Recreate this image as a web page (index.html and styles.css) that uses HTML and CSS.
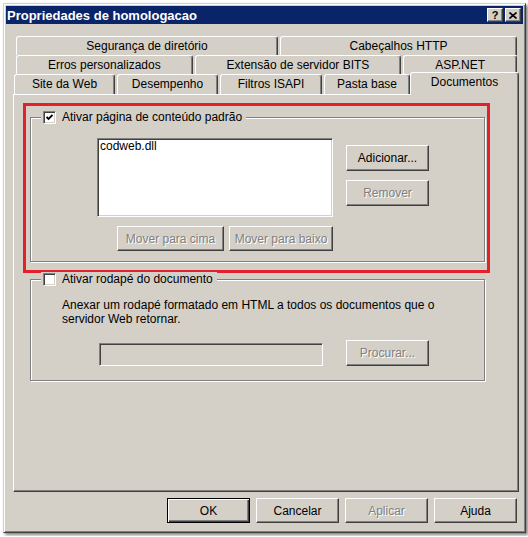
FILE: index.html
```html
<!DOCTYPE html>
<html lang="pt-BR">
<head>
    <meta charset="UTF-8">
    <meta name="viewport" content="width=device-width, initial-scale=1.0">
    <title>Propriedades de homologacao</title>
    <link rel="stylesheet" href="styles.css">
</head>
<body>
    <div class="dialog">
        <!-- Title bar with help and close buttons -->
        <div class="title-bar">
            <span class="title-text">Propriedades de homologacao</span>
            <div class="caption-buttons">
                <button class="caption-btn caption-help">?</button>
                <button class="caption-btn">
                    <svg width="8" height="7" viewBox="0 0 8 7">
                        <path d="M0.5 0.5 L7.5 6.5 M7.5 0.5 L0.5 6.5" stroke="#000" stroke-width="1.6" fill="none"/>
                    </svg>
                </button>
            </div>
        </div>

        <div class="dialog-body">
            <!-- Three rows of tabs, front row holds the selected one -->
            <div class="tab-strip">
                <div class="tab-row tab-row-top">
                    <div class="tab">Segurança de diretório</div>
                    <div class="tab">Cabeçalhos HTTP</div>
                </div>
                <div class="tab-row">
                    <div class="tab">Erros personalizados</div>
                    <div class="tab">Extensão de servidor BITS</div>
                    <div class="tab">ASP.NET</div>
                </div>
                <div class="tab-row tab-row-front">
                    <div class="tab">Site da Web</div>
                    <div class="tab">Desempenho</div>
                    <div class="tab">Filtros ISAPI</div>
                    <div class="tab">Pasta base</div>
                    <div class="tab tab-active">Documentos</div>
                </div>
            </div>

            <div class="tab-panel">
                <div class="highlight">
                    <div class="group">
                        <label class="group-legend">
                            <span class="checkbox">
                                <svg width="7" height="7" viewBox="0 0 7 7">
                                    <path d="M0.5 3 L2.5 5 L6.5 1" stroke="#000" stroke-width="1.8" fill="none"/>
                                </svg>
                            </span>
                            Ativar página de conteúdo padrão
                        </label>
                        <div class="default-docs">
                            <div class="listbox">codweb.dll</div>
                            <div class="side-buttons">
                                <button class="btn">Adicionar...</button>
                                <button class="btn" disabled>Remover</button>
                            </div>
                            <div class="move-buttons">
                                <button class="btn btn-move-up" disabled>Mover para cima</button>
                                <button class="btn btn-move-down" disabled>Mover para baixo</button>
                            </div>
                        </div>
                    </div>
                </div>

                <div class="group group-footer">
                    <label class="group-legend">
                        <span class="checkbox"></span>
                        Ativar rodapé do documento
                    </label>
                    <div class="footer-body">
                        <p class="footer-text">Anexar um rodapé formatado em HTML a todos os documentos que o servidor Web retornar.</p>
                        <div class="browse-row">
                            <input class="text-input" type="text" disabled>
                            <button class="btn" disabled>Procurar...</button>
                        </div>
                    </div>
                </div>
            </div>

            <div class="dialog-buttons">
                <button class="btn btn-dialog btn-default">OK</button>
                <button class="btn btn-dialog">Cancelar</button>
                <button class="btn btn-dialog" disabled>Aplicar</button>
                <button class="btn btn-dialog">Ajuda</button>
            </div>
        </div>
    </div>
</body>
</html>
```

FILE: styles.css
```css
/* Classic Windows dialog look */
body {
    margin: 0;
    background-color: #fff;
    font-family: "Liberation Sans", Arial, sans-serif;
    font-size: 12px;
    color: #000;
}

.dialog {
    width: 523px;
    height: 530px;
    box-sizing: border-box;
    margin: 3px;
    padding: 2px;
    background-color: #d4d0c8;
    border: 1px solid;
    border-color: #d4d0c8 #404040 #404040 #d4d0c8;
    box-shadow: inset 1px 1px #fff, inset -1px -1px #808080, 2px 2px 3px rgba(0, 0, 0, 0.5);
}

.title-bar {
    height: 18px;
    display: flex;
    align-items: center;
    justify-content: space-between;
    padding: 0 2px 0 1px;
    background-color: #0a246a;
}
.title-text {
    color: #fff;
    font-weight: bold;
    font-size: 13px;
}
.caption-buttons {
    display: flex;
    gap: 2px;
}
.caption-btn {
    width: 16px;
    height: 14px;
    box-sizing: border-box;
    padding: 0;
    display: flex;
    align-items: center;
    justify-content: center;
    background-color: #d4d0c8;
    border: 1px solid;
    border-color: #fff #404040 #404040 #fff;
    box-shadow: inset -1px -1px #808080;
    font-family: inherit;
    font-weight: bold;
    font-size: 11px;
    line-height: 1;
    color: #000;
}

.dialog-body {
    padding: 12px 4px 7px 7px;
}

/* Tabs */
.tab-row {
    display: flex;
    align-items: flex-end;
    gap: 2px;
    height: 19px;
    padding: 0 2px 0 3px;
}
.tab-row-front {
    height: 20px;
    padding-left: 1px;
}
.tab {
    flex: 1 1 auto;
    height: 100%;
    box-sizing: border-box;
    text-align: center;
    line-height: 18px;
    white-space: nowrap;
    border-top: 1px solid #fff;
    border-left: 1px solid #fff;
    border-right: 1px solid #404040;
    border-radius: 3px 3px 0 0;
    box-shadow: inset -1px 0 #808080;
}
.tab-row-top .tab:first-child {
    flex: 0 0 262px;
}
.tab-row-front .tab {
    flex: 0 0 101px;
}
.tab-row-front .tab:nth-child(3) {
    flex-basis: 102px;
}
.tab-row-front .tab:nth-child(4) {
    flex-basis: 86px;
}
.tab-row-front .tab-active {
    position: relative;
    z-index: 1;
    flex: 1 1 auto;
    height: 23px;
    margin: 0 -2px -1px -2px;
    padding-bottom: 4px;
    background-color: #d4d0c8;
}

.tab-panel {
    height: 398px;
    box-sizing: border-box;
    padding: 8px 0 0 9px;
    border-top: 1px solid #fff;
    border-left: 1px solid #fff;
    border-right: 1px solid #404040;
    border-bottom: 1px solid #404040;
    box-shadow: inset -1px -1px #808080;
}

.highlight {
    width: 467px;
    box-sizing: border-box;
    padding: 11px 2px 8px 4px;
    border: 3px solid #e3202b;
}

/* Etched group boxes */
.group {
    width: 455px;
    box-sizing: border-box;
    border: 1px solid #808080;
    box-shadow: inset 1px 1px #fff, 1px 1px #fff;
}
.group-footer {
    margin: 6px 0 0 7px;
}
.group-legend {
    display: flex;
    align-items: center;
    width: max-content;
    height: 14px;
    line-height: 14px;
    margin: -8px 0 0 10px;
    padding: 0 4px 0 2px;
    background-color: #d4d0c8;
}
.checkbox {
    width: 13px;
    height: 13px;
    box-sizing: border-box;
    display: flex;
    align-items: center;
    justify-content: center;
    margin-right: 6px;
    background-color: #fff;
    border: 1px solid;
    border-color: #808080 #fff #fff #808080;
    box-shadow: inset 1px 1px #404040, inset -1px -1px #d4d0c8;
}

.default-docs {
    display: grid;
    grid-template-columns: 236px 83px;
    column-gap: 13px;
    row-gap: 9px;
    padding: 14px 0 10px 66px;
}
.listbox {
    height: 79px;
    box-sizing: border-box;
    padding: 0 2px;
    line-height: 14px;
    background-color: #fff;
    border: 1px solid;
    border-color: #808080 #fff #fff #808080;
    box-shadow: inset 1px 1px #404040, inset -1px -1px #d4d0c8;
}
.side-buttons {
    display: flex;
    flex-direction: column;
    gap: 9px;
    padding-top: 7px;
}
.move-buttons {
    display: flex;
    justify-content: flex-end;
    gap: 5px;
}

.footer-body {
    padding: 12px 0 14px 31px;
}
.footer-text {
    width: 390px;
    margin: 0;
    line-height: 14px;
}
.browse-row {
    display: flex;
    align-items: flex-end;
    gap: 23px;
    margin-top: 14px;
    padding-left: 37px;
}
.text-input {
    width: 224px;
    height: 23px;
    box-sizing: border-box;
    margin: 0;
    background-color: #d4d0c8;
    border: 1px solid;
    border-color: #808080 #fff #fff #808080;
    box-shadow: inset 1px 1px #404040, inset -1px -1px #d4d0c8;
}

/* Buttons */
.btn {
    width: 83px;
    height: 26px;
    box-sizing: border-box;
    padding: 0;
    font-family: inherit;
    font-size: 12px;
    color: #000;
    background-color: #d4d0c8;
    border: 1px solid;
    border-color: #fff #404040 #404040 #fff;
    box-shadow: inset -1px -1px #808080;
}
.btn:disabled {
    color: #808080;
    text-shadow: 1px 1px 0 #fff;
}
.btn-move-up {
    width: 107px;
    height: 25px;
}
.btn-move-down {
    width: 104px;
    height: 25px;
}

.dialog-buttons {
    display: flex;
    justify-content: flex-end;
    gap: 6px;
    margin: 6px 2px 0 0;
}
.btn-dialog {
    height: 25px;
}
.btn-default {
    border-color: #000;
    box-shadow: inset 1px 1px #fff, inset -1px -1px #404040, inset -2px -2px #808080;
}
```
